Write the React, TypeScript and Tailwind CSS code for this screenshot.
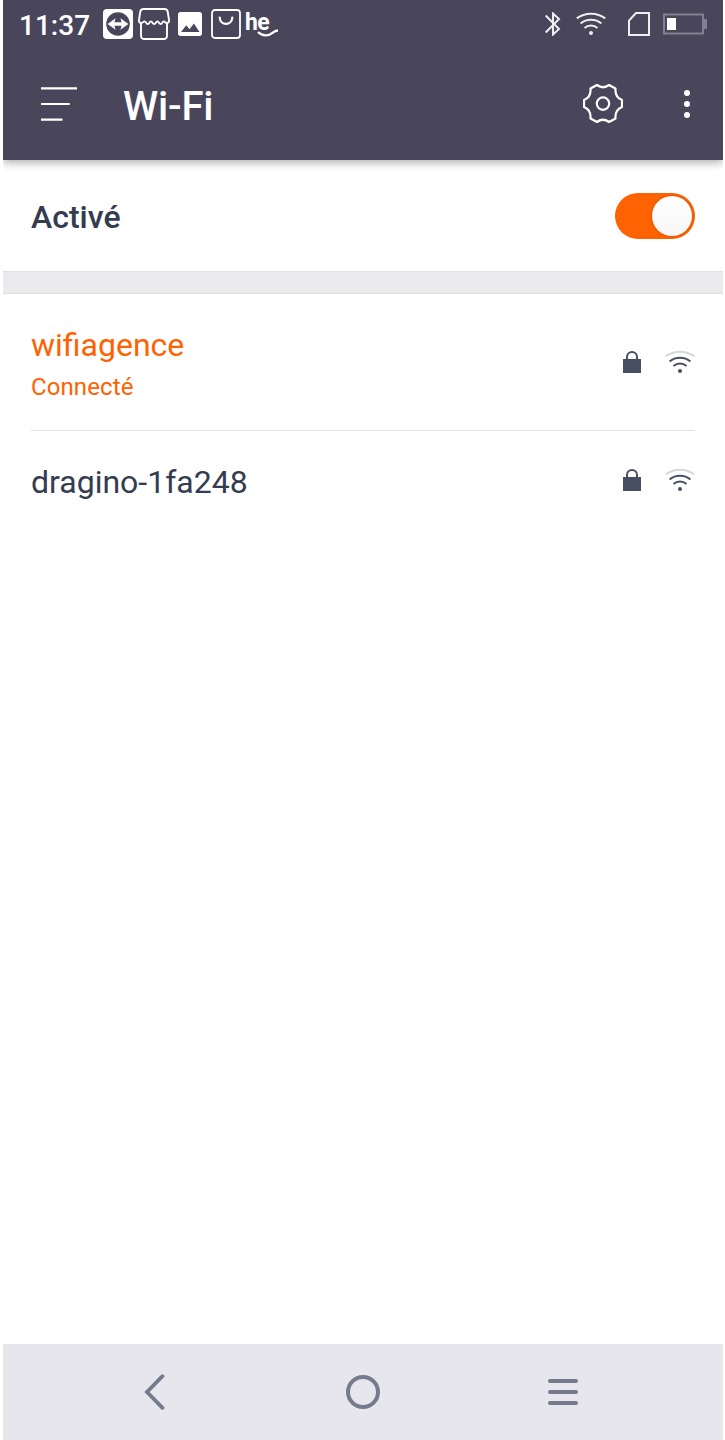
import type { ReactNode } from 'react';

interface Network {
  ssid: string;
  status?: string;
}

const NETWORKS: Network[] = [
  { ssid: 'wifiagence', status: 'Connecté' },
  { ssid: 'dragino-1fa248' },
];

function WifiIcon({ weak }: { weak?: boolean }) {
  return (
    <svg className="h-6 w-[30px] shrink-0" viewBox="0 0 30 24" fill="none" stroke="currentColor" strokeWidth={2}>
      <path d="M.8 6.4C9 .1 21 .1 29.2 6.4" stroke={weak ? '#d6d7dc' : 'currentColor'} />
      <path d="M4.6 11.5C10.5 6.6 19.5 6.6 25.4 11.5" />
      <path d="M8.5 16C12.3 12.7 17.7 12.7 21.5 16" />
      <circle cx="15" cy="21" r="2" fill="currentColor" stroke="none" />
    </svg>
  );
}

function LockIcon() {
  return (
    <svg className="h-[22px] w-[18px] shrink-0" viewBox="0 0 18 22">
      <path d="M4 9V6a5 5 0 0 1 10 0v3" fill="none" stroke="currentColor" strokeWidth={2} />
      <path d="M0 8h18v14H0z" fill="currentColor" />
    </svg>
  );
}

function StatusBar() {
  return (
    <div className="flex h-12 items-center pl-4 pr-4">
      <span className="relative top-[2px] w-[84px] text-[28px] font-medium leading-none">11:37</span>

      {/* Notification icons */}
      <svg className="h-[30px] w-[30px]" viewBox="0 0 30 30">
        <rect width="30" height="30" rx="4" fill="#fff" />
        <circle cx="15" cy="15" r="11.8" fill="#49465c" />
        <path d="M4.6 15l8-5.8-1.2 4h7.2l-1.2-4 8 5.8-8 5.8 1.2-4h-7.2l1.2 4z" fill="#fff" />
      </svg>
      <svg className="ml-[5px] h-8 w-8" viewBox="0 0 32 32" fill="none" stroke="#fff" strokeWidth={1.9} strokeLinejoin="round">
        <path d="M3.2 15C1.2 14.8.7 13.7 1 12L2.2 4C2.5 1.9 3.8 1 5.5 1h21c1.7 0 3 .9 3.3 3L31 12c.3 1.7-.2 2.8-2.2 3" />
        <path d="M3.2 15c1.9 0 1.9-1.6 3.4-1.6S8 16 9.7 16s1.6-2.6 3.2-2.6 1.6 2.6 3.3 2.6 1.6-2.6 3.2-2.6S21 16 22.7 16s1.5-2.6 3-2.6S27 15 28.8 15" />
        <path d="M3 15v12.5C3 29.8 4.2 31 6.5 31h19c2.3 0 3.5-1.2 3.5-3.5V15" />
      </svg>
      <svg className="ml-2 h-6 w-6" viewBox="0 0 24 24">
        <rect width="24" height="24" rx="2.7" fill="#fff" />
        <path d="M3 20l5.3-6.7 3.2 3.9 4.4-5.7L21.5 20z" fill="#49465c" />
      </svg>
      <svg className="ml-[9px] h-[30px] w-[30px]" viewBox="0 0 30 30" fill="none" stroke="#fff" strokeWidth={1.8}>
        <rect x="1" y="1" width="28" height="28" rx="3" />
        <path d="M8.7 8.5c.5 8.4 12.1 8.4 12.6 0" strokeWidth={2.2} strokeLinecap="round" />
      </svg>
      <div className="relative ml-[5px] h-[30px] w-8">
        <span className="absolute -left-px top-px text-[23px] font-bold leading-[26px] tracking-[-0.6px]">he</span>
        <svg className="absolute bottom-0 left-0 h-[30px] w-8" viewBox="0 0 32 30" fill="none" stroke="#fff" strokeWidth={2.4}>
          <path d="M12 23c4.5 4.6 10.5 4.1 14.5.9 1.6-1.3 3.4-2.3 5.5-2.4" />
        </svg>
      </div>

      {/* System icons */}
      <div className="ml-auto flex items-center text-[#eeeef0]">
        <svg className="h-6 w-4" viewBox="0 0 16 24" fill="none" stroke="currentColor" strokeWidth={2}>
          <path d="M.7 3.5L14 17l-6 5.5v-21L14 7 .7 20.5" />
        </svg>
        <span className="ml-[15px]"><WifiIcon /></span>
        <svg className="ml-[22px] h-6 w-[22px]" viewBox="0 0 22 24" fill="none" stroke="currentColor" strokeWidth={2}>
          <path d="M8 1h13v22H1V8.7z" />
        </svg>
        <svg className="ml-[13px] h-[22px] w-11" viewBox="0 0 44 22">
          <rect x="1" y="1.5" width="39" height="19" fill="none" stroke="#838090" strokeWidth={2} />
          <path d="M41 6h3v10h-3z" fill="#838090" />
          <path d="M4 5h9v12H4z" fill="#fff" />
        </svg>
      </div>
    </div>
  );
}

function Header() {
  return (
    <header className="relative h-40 bg-[#49465c] text-white shadow-[0_3px_8px_rgba(0,0,0,0.3)]">
      <StatusBar />
      <div className="flex h-28 items-center pl-[38px] pr-[33px]">
        <svg className="h-[34px] w-9" viewBox="0 0 36 34" stroke="#fff" strokeWidth={2.2}>
          <path d="M0 1.4h36M0 17h28.7M0 32.6h21.5" />
        </svg>
        <h1 className="relative top-[3px] ml-[46px] text-[40px] font-medium leading-none tracking-[-0.2px]">Wi-Fi</h1>
        <svg className="ml-auto h-10 w-10" viewBox="0 0 40 40" fill="none" stroke="#fff" strokeWidth={2.2} strokeLinejoin="round">
          <path d="M14 1L7.5 4.5C8 10 6 14 1 16v7c5 2 7 6 6.5 11.5L14 38c4-3 8-3 12 0l6.5-3.5C32 29 34 25 39 23v-7c-5-2-7-6-6.5-11.5L26 1c-4 3-8 3-12 0z" />
          <circle cx="20" cy="19.6" r="6.2" />
        </svg>
        <svg className="ml-[61px] h-7 w-1.5" viewBox="0 0 6 28" fill="#fff">
          <circle cx="3" cy="3" r="3" />
          <circle cx="3" cy="14" r="3" />
          <circle cx="3" cy="25" r="3" />
        </svg>
      </div>
    </header>
  );
}

function NetworkRow({ network }: { network: Network }) {
  const connected = Boolean(network.status);

  return (
    <li className="flex items-center justify-between border-b border-[#e1e1e3] last:border-b-0">
      <div className={connected ? 'h-[136px] pt-8 text-[#ff6200]' : 'h-[98px] pt-8 text-[#343c50]'}>
        <div className="text-[32px] leading-[38px]">{network.ssid}</div>
        {connected && <div className="mt-[9px] text-[24px] leading-7 tracking-[0.1px]">{network.status}</div>}
      </div>
      <div className="flex items-center gap-6 text-[#494f62]">
        <LockIcon />
        <WifiIcon weak />
      </div>
    </li>
  );
}

function NavBar({ children }: { children: ReactNode }) {
  return (
    <nav className="mt-auto flex h-24 items-center bg-[#e7e6ec] pl-[141px] text-[#757b8c]">{children}</nav>
  );
}

export default function App() {
  return (
    <div className="h-[1440px] w-[725px] overflow-hidden bg-white pl-[3px] pr-0.5 font-[Roboto,sans-serif]">
      <div className="flex h-full flex-col overflow-hidden">
        <Header />

        <div className="flex h-[111px] items-center justify-between px-7">
          <span className="relative top-px text-[32px] font-medium leading-none text-[#343c50]">Activé</span>
          <button
            type="button"
            role="switch"
            aria-checked="true"
            className="flex h-[46px] w-20 items-center justify-end rounded-full bg-[#ff6200] pr-[3px]"
          >
            <span className="h-10 w-10 rounded-full bg-linear-to-b from-white to-[#f6f6f6] shadow-[0_0_3px_rgba(0,0,0,0.25)]" />
          </button>
        </div>

        <div className="h-[23px] border-y border-[#dfdfe1] bg-[#ebebed]" />

        <ul className="px-7">
          {NETWORKS.map(network => (
            <NetworkRow key={network.ssid} network={network} />
          ))}
        </ul>

        <NavBar>
          <svg className="h-9 w-[21px]" viewBox="0 0 21 36" fill="none" stroke="currentColor" strokeWidth={3.8} strokeLinecap="round">
            <path d="M18.5 2.2L3 18l15.5 15.8" />
          </svg>
          <svg className="ml-[181px] h-[34px] w-[34px]" viewBox="0 0 34 34" fill="none" stroke="currentColor" strokeWidth={4}>
            <circle cx="17" cy="17" r="15" />
          </svg>
          <svg className="ml-[168px] h-[26px] w-[30px]" viewBox="0 0 30 26" stroke="currentColor" strokeWidth={4} strokeLinecap="round">
            <path d="M2 2h26M2 13h26M2 24h26" />
          </svg>
        </NavBar>
      </div>
    </div>
  );
}
